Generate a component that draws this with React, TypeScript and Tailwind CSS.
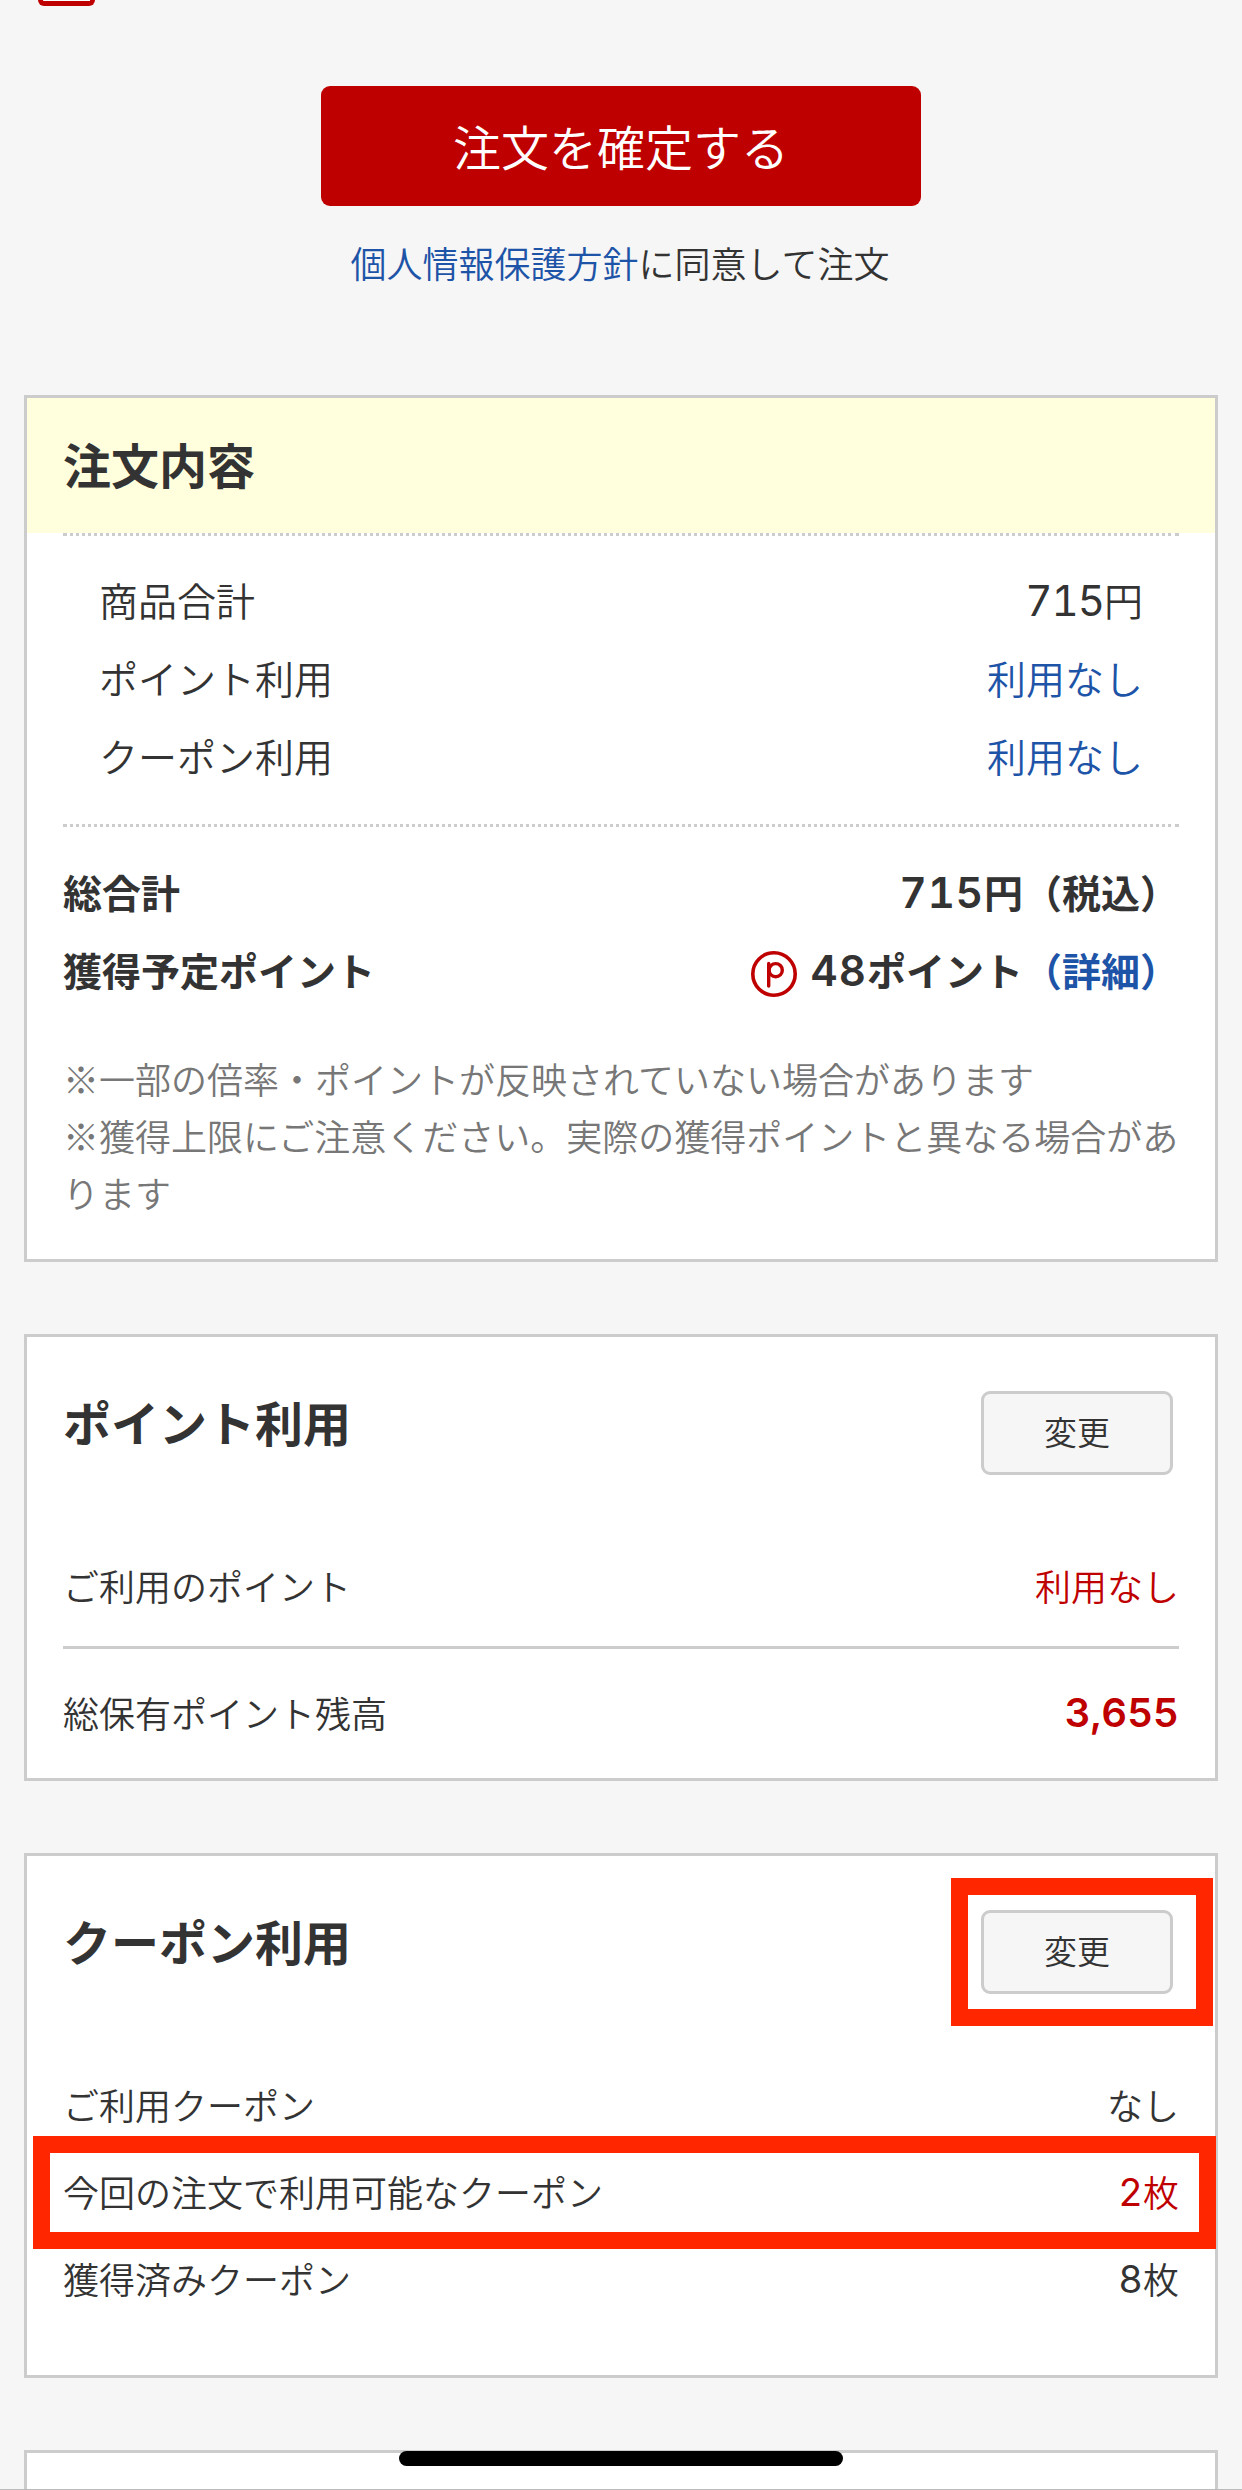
import type { ReactNode } from "react";

function Num({ children, className = "" }: { children: ReactNode; className?: string }) {
  return <span className={`font-['Inter',sans-serif] tabular-nums leading-none ${className}`}>{children}</span>;
}

function Card({ children, className = "" }: { children?: ReactNode; className?: string }) {
  return <section className={`relative mx-6 border-[3px] border-[#ccc] bg-white ${className}`}>{children}</section>;
}

function Row({ label, children, className = "" }: { label: string; children: ReactNode; className?: string }) {
  return (
    <div className={`flex items-center justify-between whitespace-nowrap ${className}`}>
      <span>{label}</span>
      <span className="flex items-center">{children}</span>
    </div>
  );
}

function Heading({ title, highlighted = false }: { title: string; highlighted?: boolean }) {
  return (
    <div className="flex h-[140px] justify-between pl-9 pr-[42px]">
      <h2 className="mt-[48px] h-[72px] text-[48px] leading-[72px] font-bold">{title}</h2>
      <div className="relative mt-[54px]">
        <button className="h-[84px] w-[192px] rounded-[9px] border-[3px] border-[#ccc] bg-[#f6f6f6] pb-[4px] text-[33px] leading-none">
          変更
        </button>
        {highlighted && (
          <div className="absolute -top-[32px] -left-[30px] h-[148px] w-[262px] border-[17px] border-[#ff2600]" />
        )}
      </div>
    </div>
  );
}

function PointIcon() {
  return (
    <svg className="mr-[14px] mt-[9px] size-[46px]" viewBox="0 0 46 46" fill="none" stroke="#bf0000">
      <circle cx="23" cy="23" r="21.2" strokeWidth="3.6" />
      <path d="M17.7 12.5V35" strokeWidth="3.4" strokeLinecap="round" />
      <circle cx="24.7" cy="19.2" r="6.6" strokeWidth="3.4" />
    </svg>
  );
}

export default function App() {
  return (
    <main
      lang="ja"
      className="relative h-[2490px] w-[1242px] overflow-hidden bg-[#f6f6f6] font-['Noto_Sans_CJK_JP',sans-serif] font-[350] text-[#333]"
    >
      <div className="h-[86px]">
        <div className="ml-[38px] h-[6px] w-[57px] rounded-b-[7px] border-[5px] border-t-0 border-[#bf0000] bg-white" />
      </div>
      <button className="mx-auto block h-[120px] w-[600px] rounded-[9px] bg-[#bf0000] pb-[2px] text-[48px] leading-[118px] text-white">
        注文を確定する
      </button>
      <p className="mt-[29px] h-[54px] pr-[2px] text-center text-[36px] leading-[54px]">
        <a className="text-[#1d54a7]">個人情報保護方針</a>に同意して注文
      </p>

      <Card className="mt-[106px] h-[867px]">
        <div className="h-[135px] bg-[#ffffdd] px-9">
          <h2 className="pt-[29px] text-[48px] leading-[72px] font-bold">注文内容</h2>
        </div>
        <div className="mx-9">
          <div className="h-[294px] border-y-[3px] border-dotted border-[#ccc] px-9 pt-[24px] text-[39px]">
            <Row label="商品合計" className="h-[78px]">
              <Num className="mt-[3px] text-[42px] font-normal -tracking-[1px]">715</Num>円
            </Row>
            <Row label="ポイント利用" className="h-[78px]">
              <a className="text-[#1d54a7]">利用なし</a>
            </Row>
            <Row label="クーポン利用" className="h-[78px]">
              <a className="text-[#1d54a7]">利用なし</a>
            </Row>
          </div>
          <div className="pt-[25px] text-[39px] font-bold">
            <Row label="総合計" className="h-[78px]">
              <Num className="mt-[3px] text-[42px] font-semibold tracking-[1px]">715</Num>円（税込）
            </Row>
            <Row label="獲得予定ポイント" className="h-[78px]">
              <PointIcon />
              <Num className="mt-[3px] text-[42px] font-semibold tracking-[1px]">48</Num>ポイント
              <a className="text-[#1d54a7]">（詳細）</a>
            </Row>
          </div>
          <p className="mt-[42px] text-[36px] leading-[57px] whitespace-nowrap text-[#777]">
            ※一部の倍率・ポイントが反映されていない場合があります
            <br />
            ※獲得上限にご注意ください。実際の獲得ポイントと異なる場合があ
            <br />
            ります
          </p>
        </div>
      </Card>

      <Card className="mt-[72px] h-[447px]">
        <Heading title="ポイント利用" />
        <div className="mx-9 text-[36px]">
          <Row label="ご利用のポイント" className="mt-[63px] h-[90px]">
            <span className="text-[#bf0000]">利用なし</span>
          </Row>
          <Row label="総保有ポイント残高" className="mt-[16px] h-[128px] border-t-[3px] border-[#ccc]">
            <Num className="mt-[2px] text-[40px] font-semibold text-[#bf0000]">3,655</Num>
          </Row>
        </div>
      </Card>

      <Card className="mt-[72px] h-[525px]">
        <Heading title="クーポン利用" highlighted />
        <div className="mx-9 pt-[64px] text-[36px]">
          <Row label="ご利用クーポン" className="h-[87px]">
            なし
          </Row>
          <div className="relative">
            <Row label="今回の注文で利用可能なクーポン" className="h-[87px]">
              <span className="flex items-center text-[#bf0000]">
                <Num className="mt-[3px] text-[38px] font-normal">2</Num>枚
              </span>
            </Row>
            <div className="absolute -top-[11px] -left-[30px] h-[113px] w-[1183px] border-[17px] border-[#ff2600]" />
          </div>
          <Row label="獲得済みクーポン" className="h-[87px]">
            <Num className="mt-[3px] text-[38px] font-normal">8</Num>枚
          </Row>
        </div>
      </Card>

      <Card className="mt-[72px] h-[80px]" />
      <div className="absolute top-[2451px] left-[399px] h-[15px] w-[444px] rounded-full bg-black" />
      <div className="absolute bottom-0 left-0 h-px w-full bg-[#bbb]" />
    </main>
  );
}
